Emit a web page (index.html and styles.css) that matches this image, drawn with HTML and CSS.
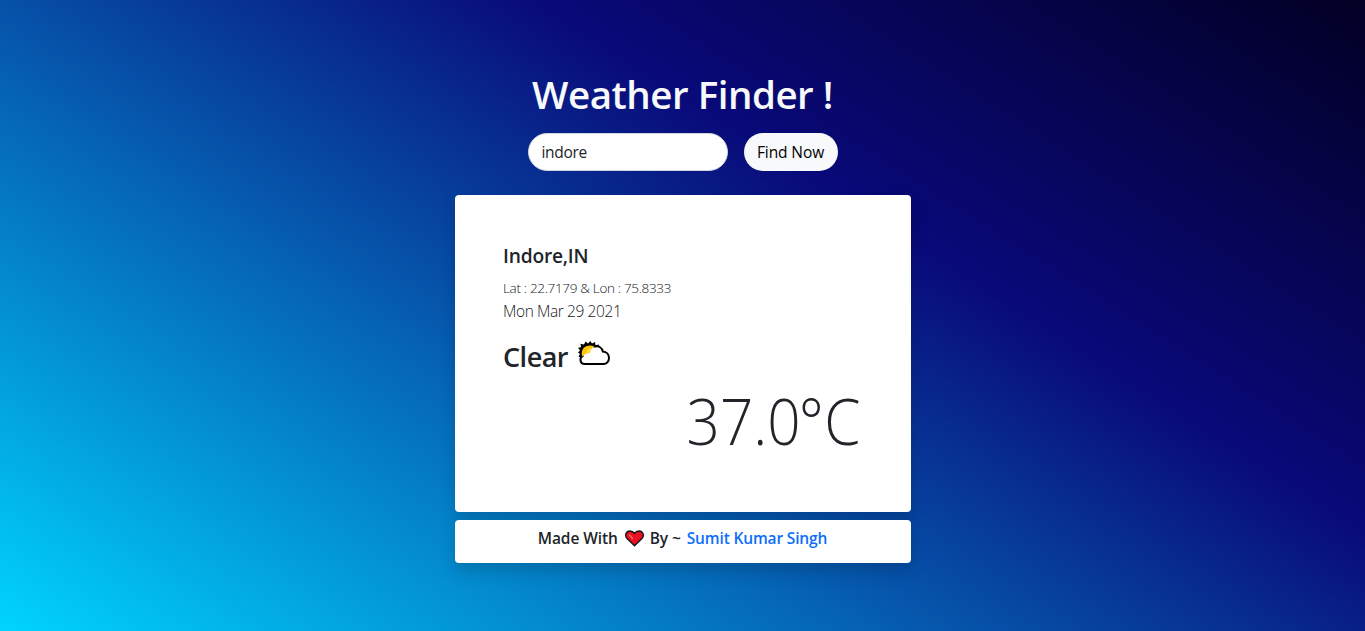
FILE: index.html
```html
<!DOCTYPE html>
<html lang="en">
<head>
<meta charset="utf-8">
<title>Weather Finder</title>
<link rel="stylesheet" href="styles.css">
</head>
<body>
<main class="page">
  <h1 class="title">Weather Finder !</h1>
  <form class="search">
    <input class="search-input" type="text" value="indore" aria-label="City">
    <button class="search-button" type="button">Find Now</button>
  </form>
  <section class="stack">
    <article class="card weather">
      <h2 class="city">Indore,IN</h2>
      <p class="coords">Lat : 22.7179 &amp; Lon : 75.8333</p>
      <p class="date">Mon Mar 29 2021</p>
      <div class="condition">
        <span class="condition-name">Clear</span>
        <svg class="cloud" viewBox="0 0 32 24" aria-hidden="true">
          <path d="M4 17 .5 15.500 2 13 0 11.500 2 9.500 0 6.800 3 6.200 2.500 2.800 6 3.500 7.600 .5 10 2.500 12.300 0 14 2.500 17 1 17.500 4.200 21 3.600 20.500 7Z" fill="#000"/>
          <path d="M7 23c-3 0-4.500-1.800-4.500-4.200 0-2 .9-3.300 2-3.800C3 11 4.500 6.500 8.500 5.300c3-1 6-.6 8 .2 4.500-1 7.500 1.500 8.300 5 3.600.2 6.200 3 6.200 6.500S28.500 23 25.500 23Z" fill="#fff" stroke="#000" stroke-width="2"/>
          <path d="M4.300 15.500C2.800 11 4.500 6.500 8.300 5.200c2.800-1 5.800-.8 8 .2-2.700 1.500-4.300 3.800-4.500 6.700-2.500 0-5.500.7-7.500 3.400Z" fill="#ffc400"/>
          <path d="M8 12.500c.8-3.500 3-5.500 6-5.700-2 1.400-2.900 3.200-3.200 5.400Z" fill="#ffe34d"/>
        </svg>
      </div>
      <p class="temperature"><span class="degrees">37.0<span class="unit">°C</span></span></p>
    </article>
    <footer class="card credit">
      <span>Made With</span>
      <svg class="heart" viewBox="0 0 19 17" aria-hidden="true">
        <path d="M9.500 15.800 1.800 8.200C-.5 5.500 1 1 5 1c2 0 3.500 1 4.500 2.400C10.500 2 12 1 14 1c4 0 5.500 4.500 3.200 7.200Z" fill="#e81224" stroke="#111" stroke-width="1.300"/>
        <path d="m4.500 5 3 3.500" stroke="#f4645a" stroke-width="1.500" stroke-linecap="round"/>
      </svg>
      <span>By ~</span>
      <a class="author">Sumit Kumar Singh</a>
    </footer>
  </section>
</main>
</body>
</html>
```
FILE: styles.css
```css
* { box-sizing: border-box; }
body {
  margin: 0;
  height: 631px;
  overflow: hidden;
  font-family: "Open Sans", "Noto Sans", sans-serif;
  color: #212529;
  background: linear-gradient(212.5deg, #020024 0%, #090979 35%, #00d4ff 100%);
}
h1, h2, p { margin: 0; }
.page {
  display: flex;
  flex-direction: column;
  align-items: center;
  padding-top: 70px;
}
.title {
  height: 48px;
  font-size: 38.500px;
  line-height: 48px;
  font-weight: 600;
  letter-spacing: -.48px;
  color: #f8f9fa;
  white-space: nowrap;
}
.search {
  display: flex;
  gap: 16px;
  margin: 15px 0 24px;
}
.search-input {
  width: 200px;
  height: 38px;
  padding: 6px 12px 6px 13px;
  border: 1px solid #ced4da;
  border-radius: 20px;
  background: #fff;
  color: #212529;
  font: 15.500px/24px "Open Sans", sans-serif;
  letter-spacing: -.3px;
}
.search-button {
  width: 94px;
  height: 38px;
  padding: 0;
  border: 0;
  border-radius: 20px;
  background: #f8f9fa;
  color: #000;
  font: 15.500px/24px "Open Sans", sans-serif;
  letter-spacing: -.1px;
  white-space: nowrap;
}
.stack {
  display: flex;
  flex-direction: column;
  gap: 8px;
  width: 456px;
}
.card {
  border-radius: 4px;
  background: #fff;
  box-shadow: 0 8px 16px rgba(0, 0, 0, .15);
}
.weather { height: 317px; padding: 48px; }
.city {
  margin: 1px 0 0 .5px;
  font-size: 19.200px;
  line-height: 24px;
  font-weight: 600;
  letter-spacing: -.2px;
}
.coords {
  margin: 8px 0 0 .5px;
  font-size: 13.500px;
  line-height: 24px;
  font-weight: 300;
  letter-spacing: -.32px;
  color: #15181b;
}
.date {
  margin: -1px 0 0 .5px;
  font-size: 15.500px;
  line-height: 24px;
  font-weight: 300;
  letter-spacing: -.4px;
  color: #15181b;
}
.condition { display: flex; height: 34px; margin: 17px 0 0 .5px; }
.condition-name {
  font-size: 27px;
  line-height: 34px;
  font-weight: 600;
  letter-spacing: -.5px;
}
.cloud { width: 32px; height: 24px; margin: 1px 0 0 10px; }
.temperature {
  margin: 8px 2px 0 0;
  font-size: 64px;
  line-height: 77px;
  font-weight: 300;
  text-align: right;
}
.degrees {
  display: inline-block;
  transform: scaleX(.913);
  transform-origin: right;
}
.unit { margin-left: -2px; letter-spacing: .5px; }
.credit {
  display: flex;
  justify-content: center;
  height: 43px;
  padding-top: 6px;
  font-size: 15.500px;
  line-height: 24px;
  font-weight: 600;
  letter-spacing: -.1px;
}
.heart { width: 19px; height: 17px; margin: 4px 6px 0 7px; fill: none; }
.author { margin-left: 6px; color: #0d6efd; letter-spacing: -.15px; }
```
